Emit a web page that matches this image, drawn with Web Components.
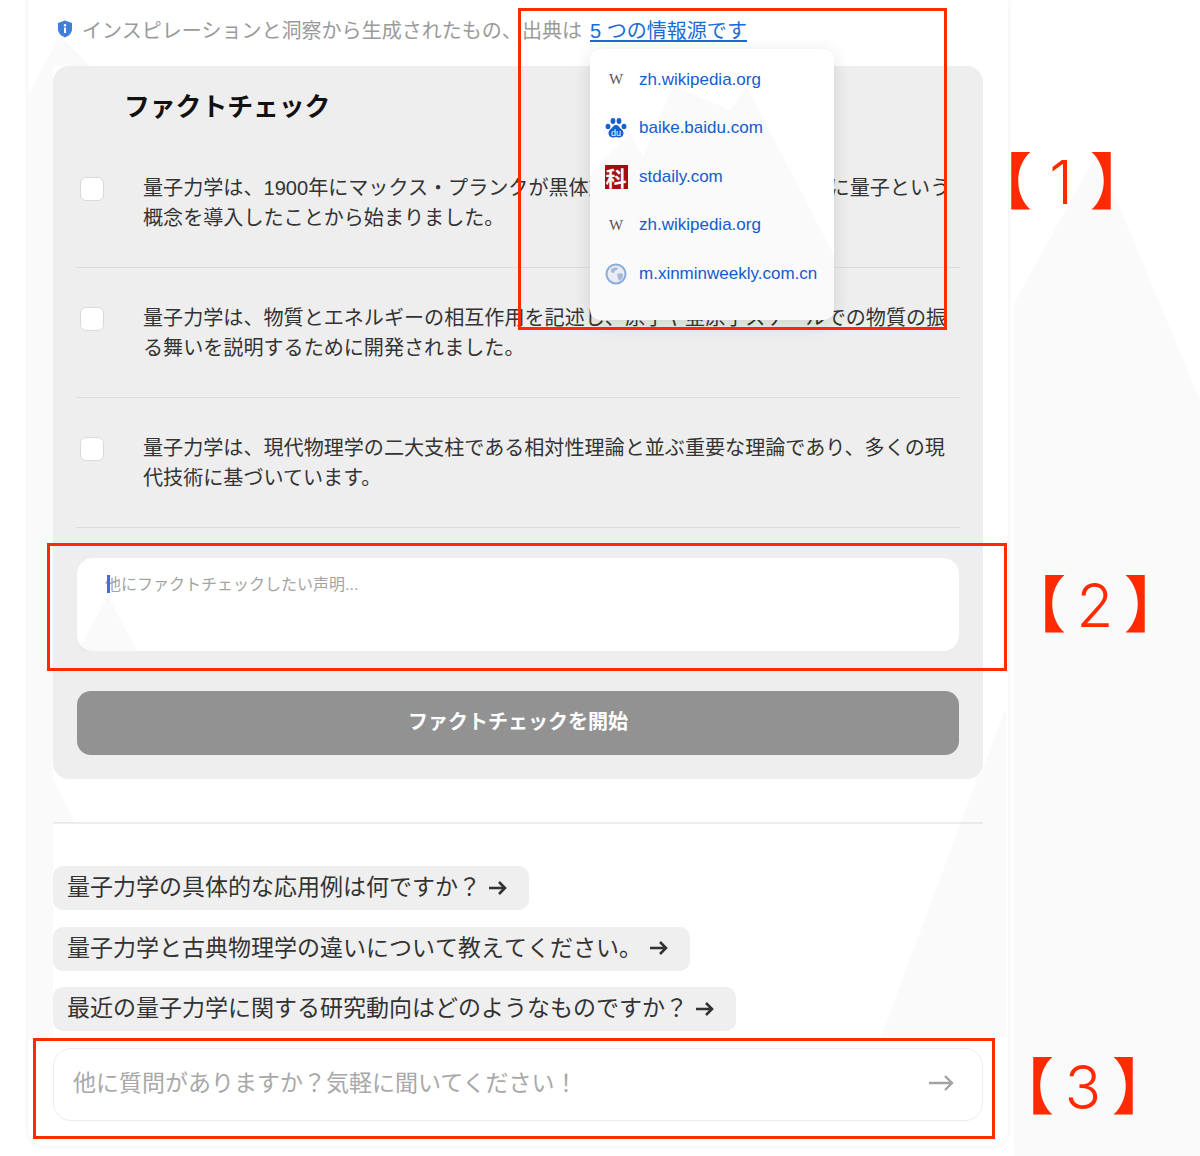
<!DOCTYPE html>
<html lang="ja">
<head>
<meta charset="utf-8">
<title>ファクトチェック</title>
<style>
    html, body {
        margin: 0;
        background: #fff;
        font-family: "Liberation Sans", "Noto Sans CJK JP", sans-serif;
        text-spacing-trim: space-all;
    }
</style>
</head>
<body>
<fact-page>
    <source-line count="5 つの情報源です">
        <source-item kind="wiki">zh.wikipedia.org</source-item>
        <source-item kind="baidu">baike.baidu.com</source-item>
        <source-item kind="stdaily">stdaily.com</source-item>
        <source-item kind="wiki">zh.wikipedia.org</source-item>
        <source-item kind="globe">m.xinminweekly.com.cn</source-item>
    </source-line>
    <fact-card>
        <fact-row>量子力学は、1900年にマックス・プランクが黒体放射の問題を解決するために量子という概念を導入したことから始まりました。</fact-row>
        <fact-row>量子力学は、物質とエネルギーの相互作用を記述し、原子や亜原子スケールでの物質の振る舞いを説明するために開発されました。</fact-row>
        <fact-row>量子力学は、現代物理学の二大支柱である相対性理論と並ぶ重要な理論であり、多くの現代技術に基づいています。</fact-row>
    </fact-card>
    <ask-chip>量子力学の具体的な応用例は何ですか？</ask-chip>
    <ask-chip>量子力学と古典物理学の違いについて教えてください。</ask-chip>
    <ask-chip>最近の量子力学に関する研究動向はどのようなものですか？</ask-chip>
    <ask-input placeholder="他に質問がありますか？気軽に聞いてください！"></ask-input>
</fact-page>

<script>
const FONT = '"Liberation Sans", "Noto Sans CJK JP", sans-serif';

const ICONS = {
    wiki: `<span class="wiki">W</span>`,
    baidu: `<svg width="22" height="22" viewBox="0 0 22 22">
        <g fill="#1260d2">
            <ellipse cx="3" cy="9.5" rx="2.4" ry="2.8"/>
            <ellipse cx="8" cy="4" rx="2.4" ry="3"/>
            <ellipse cx="14" cy="4" rx="2.4" ry="3"/>
            <ellipse cx="19" cy="9.5" rx="2.4" ry="2.8"/>
            <path d="M11 8c2.6 0 3.4 2.6 5.2 4 1.7 1.3 2.4 2.7 2.3 4.4-.2 2.6-2.2 4.1-4.6 4.1-1.3 0-2-.5-2.9-.5s-1.600.5-2.900.5c-2.400 0-4.400-1.500-4.600-4.100-.1-1.700.600-3.100 2.300-4.400C7.600 10.600 8.400 8 11 8z"/>
        </g>
        <text x="11" y="19" text-anchor="middle" font-size="9" font-family="Liberation Sans" fill="#fff">du</text>
    </svg>`,
    stdaily: `<span class="stdaily">科</span>`,
    globe: `<svg width="22" height="22" viewBox="0 0 22 22">
        <circle cx="11" cy="11" r="9.500" fill="#eef2f8" stroke="#8fb0de" stroke-width="2"/>
        <path d="M6 6.500c2-2 5-2.500 7-1.500l-1 2-2 .5-.5 2-2 .5-1.500-1.500zM12 11l4-1 2.500 2-1.500 4-3 2-1-3z" fill="#a7bfe2"/>
    </svg>`,
};

class SourceItem extends HTMLElement {
    constructor() {
        super();
        const kind = this.getAttribute('kind');
        this.attachShadow({ mode: "open" }).innerHTML = `
            <style>
            :host {
                display: flex;
                align-items: center;
                height: 48.5px;
                color: #1260d2;
                font-size: 17px;
            }
            .icon {
                width: 24px;
                height: 24px;
                margin-right: 11px;
                display: flex;
                align-items: center;
                justify-content: center;
                flex: none;
            }
            .wiki {
                font: 15px/1 "Liberation Serif", serif;
                color: #555;
            }
            .stdaily {
                width: 23px;
                height: 24px;
                background: #a90e0e;
                color: #fff;
                font: 700 21px/24px "Noto Sans CJK JP", sans-serif;
                text-align: center;
            }
            </style>
            <span class="icon">${ICONS[kind]}</span>
            <slot></slot>
        `;
    }
}

class SourceLine extends HTMLElement {
    constructor() {
        super();
        this.attachShadow({ mode: "open" }).innerHTML = `
            <style>
            :host {
                display: flex;
                align-items: center;
                position: relative;
                z-index: 5;
                height: 58px;
                padding: 0 0 2px 4px;
                color: #9a9a9a;
                font-size: 20.05px;
            }
            svg { flex: none; margin-right: 9px; }
            a {
                color: #1a6bd6;
                text-decoration: underline;
                margin-left: 8px;
            }
            .pop {
                position: absolute;
                left: 537px;
                top: 49px;
                width: 215px;
                height: 247px;
                padding: 6.4px 15px 17.6px 14px;
                background: #fff;
                border-radius: 10px;
                box-shadow: 0 4px 18px rgba(0, 0, 0, .12);
            }
            </style>
            <svg width="16" height="18" viewBox="0 0 16 18">
                <path d="M8 .5 15 3v6c0 4-3 7-7 8.500C4 16 1 13 1 9V3z" fill="#3f7fdc"/>
                <rect x="7" y="7.500" width="2" height="5.500" fill="#fff"/>
                <circle cx="8" cy="5.200" r="1.200" fill="#fff"/>
            </svg>
            <span>インスピレーションと洞察から生成されたもの、出典は</span>
            <a>${this.getAttribute('count')}</a>
            <div class="pop"><slot></slot></div>
        `;
    }
}

class FactRow extends HTMLElement {
    constructor() {
        super();
        this.attachShadow({ mode: "open" }).innerHTML = `
            <style>
            :host {
                display: flex;
                align-items: flex-start;
                padding: 35px 5px 34px 4px;
                border-bottom: 1px solid #dcdcdc;
                color: #333;
                font-size: 20.08px;
                line-height: 30px;
            }
            .box {
                flex: none;
                width: 22px;
                height: 22px;
                margin: 4px 39px 0 0;
                background: #fff;
                border: 1px solid #dadada;
                border-radius: 6px;
            }
            </style>
            <span class="box"></span>
            <span><slot></slot></span>
        `;
    }
}

class FactCard extends HTMLElement {
    constructor() {
        super();
        this.attachShadow({ mode: "open" }).innerHTML = `
            <style>
            :host {
                display: block;
                margin-top: 6px;
                padding: 25px 23px 24px;
                background: #eee;
                border-radius: 16px;
            }
            h2 {
                margin: 0 0 15px 48px;
                color: #111;
                font-size: 25.8px;
                line-height: 32px;
                font-weight: 700;
            }
            .claim {
                position: relative;
                height: 93px;
                margin: 30px 1px 0;
                padding: 15px 28px;
                box-sizing: border-box;
                background: #fff;
                border-radius: 16px;
                color: #a3a3a3;
                font-size: 16px;
                line-height: 24px;
            }
            .caret {
                position: absolute;
                left: 30px;
                top: 17px;
                width: 3px;
                height: 18px;
                background: #3a70d8;
            }
            .go {
                height: 64px;
                box-sizing: border-box;
                padding-bottom: 6px;
                margin: 40px 1px 0;
                display: flex;
                align-items: center;
                justify-content: center;
                background: #929292;
                border-radius: 14px;
                color: #fff;
                font-size: 20px;
                font-weight: 700;
            }
            </style>
            <h2>ファクトチェック</h2>
            <slot></slot>
            <div class="claim"><span class="caret"></span>他にファクトチェックしたい声明...</div>
            <div class="go">ファクトチェックを開始</div>
        `;
    }
}

class AskChip extends HTMLElement {
    constructor() {
        super();
        this.attachShadow({ mode: "open" }).innerHTML = `
            <style>
            :host {
                display: flex;
                align-items: center;
                gap: 7px;
                width: fit-content;
                height: 44px;
                padding: 0 22px 0 14px;
                background: #efefef;
                border-radius: 10px;
                color: #333;
                font-size: 23px;
                font-kerning: none;
            }
            span { margin-bottom: 6px; }
            svg { flex: none; margin-bottom: 1px; }
            </style>
            <span><slot></slot></span>
            <svg width="19" height="16" viewBox="0 0 19 16" fill="none" stroke="#333" stroke-width="2.600">
                <path d="M1 8h16M11 2l6 6-6 6"/>
            </svg>
        `;
    }
}

class AskInput extends HTMLElement {
    constructor() {
        super();
        this.attachShadow({ mode: "open" }).innerHTML = `
            <style>
            :host {
                display: flex;
                align-items: center;
                justify-content: space-between;
                box-sizing: border-box;
                height: 73px;
                margin-top: 17px;
                padding: 0 28px 0 19px;
                background: #fff;
                border: 1px solid #ececec;
                border-radius: 18px;
                color: #a8a8a8;
                font-size: 23px;
            }
            span { margin-bottom: 8px; }
            svg { margin-bottom: 3px; }
            </style>
            <span>${this.getAttribute('placeholder')}</span>
            <svg width="25" height="18" viewBox="0 0 25 18" fill="none" stroke="#a3a3a3" stroke-width="2.400">
                <path d="M0 9h23M16 2l7 7-7 7"/>
            </svg>
        `;
    }
}

// faint watermark, lies over the whole page
class MountainLayer extends HTMLElement {
    constructor() {
        super();
        this.attachShadow({ mode: "open" }).innerHTML = `
            <style>
            :host {
                position: absolute;
                left: 0;
                top: 0;
                width: 1200px;
                height: 1156px;
                z-index: 6;
                pointer-events: none;
            }
            svg { display: block; }
            </style>
            <svg width="1200" height="1156" fill="#000" fill-opacity=".02">
                <path d="M1014 303 1097 153 1200 400V1156H1014z"/>
                <path d="M1006 707 983 768V770L974 779H977L881 1037H1006z"/>
                <path d="M28 95 60 35 90 66H53V779L75 823 53 823V1040H28z"/>
                <path d="M108 595 137 651H78L78 651z"/>
                <path d="M590 175 630 133 643 157 673 85 730 110 747 87 834 255V308Q834 320 822 320H602Q590 320 590 308z"/>
            </svg>
        `;
    }
}

class NoteBox extends HTMLElement {
    constructor() {
        super();
        const [x, y, w, h] = this.getAttribute('rect').split(' ');
        this.attachShadow({ mode: "open" }).innerHTML = `
            <style>
            :host {
                position: absolute;
                left: ${x}px;
                top: ${y}px;
                width: ${w}px;
                height: ${h}px;
                box-sizing: border-box;
                border: 3px solid #ff2a00;
                z-index: 7;
            }
            </style>
        `;
    }
}

class NoteLabel extends HTMLElement {
    constructor() {
        super();
        const [x, y] = this.getAttribute('at').split(' ');
        this.attachShadow({ mode: "open" }).innerHTML = `
            <style>
            :host {
                position: absolute;
                left: ${x}px;
                top: ${y}px;
                z-index: 7;
                color: #ff2a00;
                font: 700 61px/61px "Noto Sans CJK JP", sans-serif;
                white-space: nowrap;
            }
            b {
                display: inline-block;
                width: 58px;
                text-align: center;
                font: 300 60px/61px Inter, sans-serif;
            }
            </style>
            【<b>${this.getAttribute('n')}</b>】
        `;
    }
}

class FactPage extends HTMLElement {
    constructor() {
        super();
        this.attachShadow({ mode: "open" }).innerHTML = `
            <style>
            :host {
                display: block;
                position: relative;
                width: 1200px;
                height: 1156px;
                overflow: hidden;
                background: #fff;
                color: #333;
                font-family: ${FONT};
            }
            .sheet {
                margin-left: 28px;
                width: 980px;
                box-sizing: border-box;
                padding: 0 25px 25px;
                background: #fff;
                border-radius: 0 0 16px 16px;
                box-shadow: 0 0 5px rgba(0, 0, 0, .08);
            }
            hr {
                height: 2px;
                margin: 43px 0 42px;
                border: 0;
                background: #eee;
            }
            .chips {
                display: flex;
                flex-direction: column;
                gap: 16.5px;
            }
            </style>
            <div class="sheet">
                <slot name="top"></slot>
                <slot></slot>
                <hr>
                <div class="chips"><slot name="chip"></slot></div>
                <slot name="bottom"></slot>
            </div>
            <mountain-layer></mountain-layer>
            <note-box rect="518 8 429 322"></note-box>
            <note-box rect="47 543 960 128"></note-box>
            <note-box rect="33 1038 962 101"></note-box>
            <note-label n="1" at="971 147"></note-label>
            <note-label n="2" at="1005 570"></note-label>
            <note-label n="3" at="993 1052"></note-label>
        `;
    }
}

// slots are set before the elements are upgraded
document.querySelector('source-line').slot = 'top';
document.querySelectorAll('ask-chip').forEach((chip) => { chip.slot = 'chip'; });
document.querySelector('ask-input').slot = 'bottom';

customElements.define("mountain-layer", MountainLayer);
customElements.define("note-box", NoteBox);
customElements.define("note-label", NoteLabel);
customElements.define("source-item", SourceItem);
customElements.define("source-line", SourceLine);
customElements.define("fact-row", FactRow);
customElements.define("fact-card", FactCard);
customElements.define("ask-chip", AskChip);
customElements.define("ask-input", AskInput);
customElements.define("fact-page", FactPage);
</script>
</body>
</html>
